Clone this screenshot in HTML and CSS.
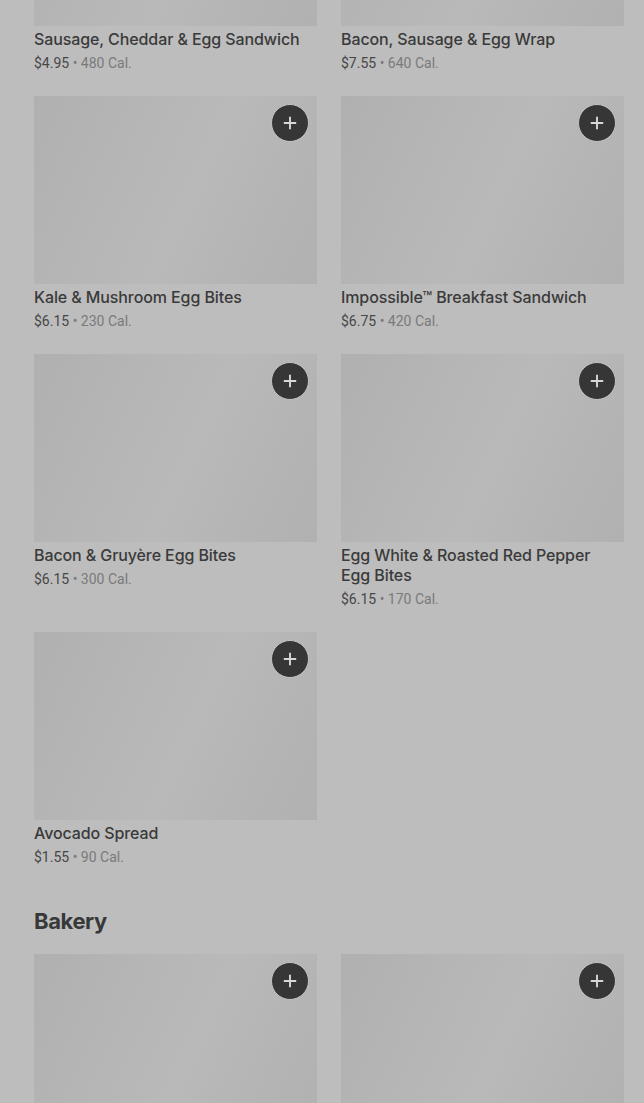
FILE: index.html
```html
<!DOCTYPE html>
<html lang="en">
<head>
<meta charset="utf-8">
<title>Menu</title>
<link rel="stylesheet" href="styles.css">
</head>
<body>
<main class="page">
  <section class="section first">
    <div class="grid">
      <article class="card">
        <div class="thumb"><button class="add" aria-label="Add"><svg viewBox="0 0 16 16" width="14" height="14"><path d="M8 2v12M2 8h12" stroke="currentColor" stroke-width="2.2" stroke-linecap="square"/></svg></button></div>
        <h3 class="name">Sausage, Cheddar &amp; Egg Sandwich</h3>
        <p class="meta"><span class="price">$4.95</span> • <span class="cal">480 Cal.</span></p>
      </article>
      <article class="card">
        <div class="thumb"><button class="add" aria-label="Add"><svg viewBox="0 0 16 16" width="14" height="14"><path d="M8 2v12M2 8h12" stroke="currentColor" stroke-width="2.2" stroke-linecap="square"/></svg></button></div>
        <h3 class="name">Bacon, Sausage &amp; Egg Wrap</h3>
        <p class="meta"><span class="price">$7.55</span> • <span class="cal">640 Cal.</span></p>
      </article>
      <article class="card">
        <div class="thumb"><button class="add" aria-label="Add"><svg viewBox="0 0 16 16" width="14" height="14"><path d="M8 2v12M2 8h12" stroke="currentColor" stroke-width="2.2" stroke-linecap="square"/></svg></button></div>
        <h3 class="name">Kale &amp; Mushroom Egg Bites</h3>
        <p class="meta"><span class="price">$6.15</span> • <span class="cal">230 Cal.</span></p>
      </article>
      <article class="card">
        <div class="thumb"><button class="add" aria-label="Add"><svg viewBox="0 0 16 16" width="14" height="14"><path d="M8 2v12M2 8h12" stroke="currentColor" stroke-width="2.2" stroke-linecap="square"/></svg></button></div>
        <h3 class="name">Impossible™ Breakfast Sandwich</h3>
        <p class="meta"><span class="price">$6.75</span> • <span class="cal">420 Cal.</span></p>
      </article>
      <article class="card">
        <div class="thumb"><button class="add" aria-label="Add"><svg viewBox="0 0 16 16" width="14" height="14"><path d="M8 2v12M2 8h12" stroke="currentColor" stroke-width="2.2" stroke-linecap="square"/></svg></button></div>
        <h3 class="name">Bacon &amp; Gruyère Egg Bites</h3>
        <p class="meta"><span class="price">$6.15</span> • <span class="cal">300 Cal.</span></p>
      </article>
      <article class="card">
        <div class="thumb"><button class="add" aria-label="Add"><svg viewBox="0 0 16 16" width="14" height="14"><path d="M8 2v12M2 8h12" stroke="currentColor" stroke-width="2.2" stroke-linecap="square"/></svg></button></div>
        <h3 class="name">Egg White &amp; Roasted Red Pepper Egg Bites</h3>
        <p class="meta"><span class="price">$6.15</span> • <span class="cal">170 Cal.</span></p>
      </article>
      <article class="card">
        <div class="thumb"><button class="add" aria-label="Add"><svg viewBox="0 0 16 16" width="14" height="14"><path d="M8 2v12M2 8h12" stroke="currentColor" stroke-width="2.2" stroke-linecap="square"/></svg></button></div>
        <h3 class="name">Avocado Spread</h3>
        <p class="meta"><span class="price">$1.55</span> • <span class="cal">90 Cal.</span></p>
      </article>
    </div>
  </section>
  <section class="section">
    <h2 class="section-title">Bakery</h2>
    <div class="grid">
      <article class="card">
        <div class="thumb"><button class="add" aria-label="Add"><svg viewBox="0 0 16 16" width="14" height="14"><path d="M8 2v12M2 8h12" stroke="currentColor" stroke-width="2.2" stroke-linecap="square"/></svg></button></div>
      </article>
      <article class="card">
        <div class="thumb"><button class="add" aria-label="Add"><svg viewBox="0 0 16 16" width="14" height="14"><path d="M8 2v12M2 8h12" stroke="currentColor" stroke-width="2.2" stroke-linecap="square"/></svg></button></div>
      </article>
    </div>
  </section>
</main>
</body>
</html>
```

FILE: styles.css
```css
html, body {
  margin: 0;
  padding: 0;
  background: #bdbdbd;
  height: 1103px;
  overflow: hidden;
}
body {
  font-family: Roboto, "Liberation Sans", Arial, sans-serif;
  color: #363636;
}
.page {
  margin-top: -162px;
  padding: 0 20px 0 34px;
}
.section.first {
  padding-bottom: 38px;
}
.grid {
  display: grid;
  grid-template-columns: 283px 283px;
  column-gap: 24px;
  row-gap: 23px;
}
.card {
  min-width: 0;
}
.thumb {
  position: relative;
  height: 188px;
  background: linear-gradient(115deg, #b0b0b0 0%, #b6b6b6 35%, #b9b9b9 55%, #b4b4b4 80%, #b1b1b1 100%);
}
.add {
  position: absolute;
  top: 8px;
  right: 8px;
  width: 38px;
  height: 38px;
  border-radius: 50%;
  border: 1px solid #c2c2c2;
  background: #363636;
  color: #d6d6d6;
  padding: 0;
  display: flex;
  align-items: center;
  justify-content: center;
}
.name {
  margin: 3px 0 0;
  padding-right: 4px;
  font-family: Inter, Roboto, "Liberation Sans", Arial, sans-serif;
  font-size: 16px;
  line-height: 20px;
  font-weight: 500;
  letter-spacing: -0.1px;
  color: #3a3a3a;
}
.meta {
  margin: 4px 0 0;
  font-size: 14px;
  line-height: 20px;
  color: #7a7a7a;
}
.price {
  color: #474747;
}
.cal {
  color: #7a7a7a;
}
.section-title {
  margin: 0 0 17px;
  font-family: Inter, Roboto, "Liberation Sans", Arial, sans-serif;
  font-size: 22px;
  line-height: 32px;
  font-weight: 700;
  color: #383838;
  letter-spacing: -0.4px;
}
```
